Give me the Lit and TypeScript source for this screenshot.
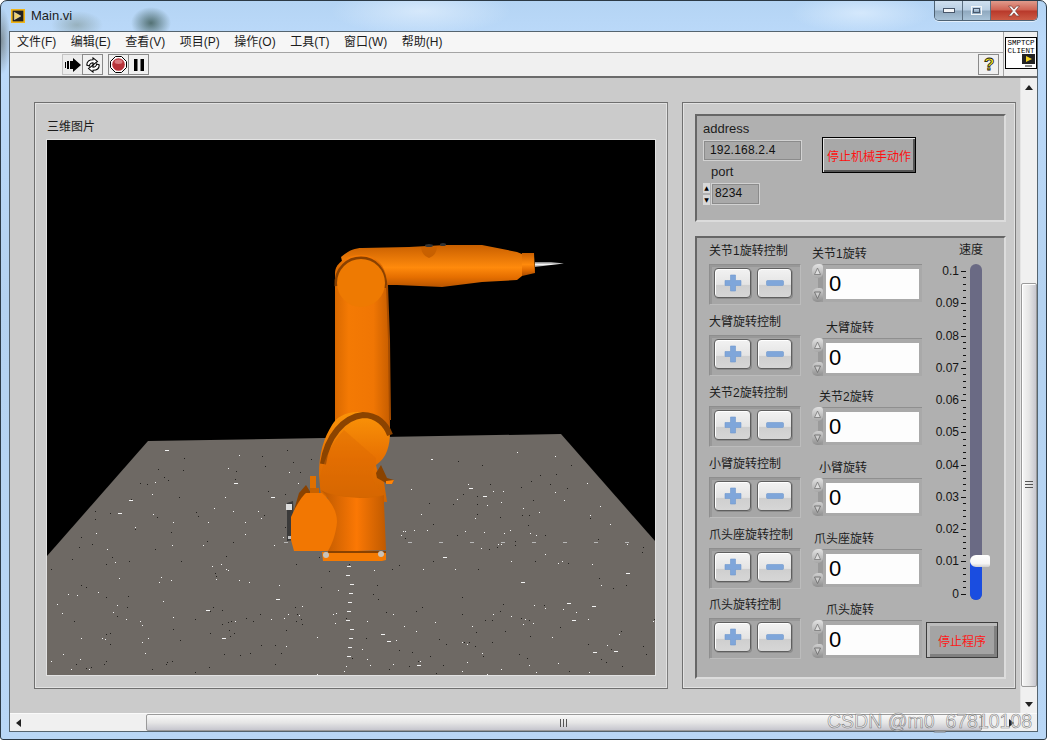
import { LitElement, css, html, svg } from 'lit';
import { customElement } from 'lit/decorators.js';

const MENUS = ['文件(F)', '编辑(E)', '查看(V)', '项目(P)', '操作(O)', '工具(T)', '窗口(W)', '帮助(H)'];

// gap = space above the right hand row, pad = label indent
const JOINTS = [
  { ctrl: '关节1旋转控制', name: '关节1旋转', gap: 9, pad: 0, ctrlGap: 0 },
  { ctrl: '大臂旋转控制', name: '大臂旋转', gap: 19, pad: 14, ctrlGap: 10 },
  { ctrl: '关节2旋转控制', name: '关节2旋转', gap: 14, pad: 7, ctrlGap: 10 },
  { ctrl: '小臂旋转控制', name: '小臂旋转', gap: 16, pad: 7, ctrlGap: 10 },
  { ctrl: '爪头座旋转控制', name: '爪头座旋转', gap: 16, pad: 2, ctrlGap: 10 },
  { ctrl: '爪头旋转控制', name: '爪头旋转', gap: 16, pad: 14, ctrlGap: 9 },
];

const TICKS = Array.from({ length: 51 }, (_, i) => {
  const major = i % 5 === 0;
  const v = (50 - i) / 500;
  return { major, label: major ? (i === 50 ? '0' : String(Number(v.toFixed(2)))) : '' };
});

// floor speckle, seeded so each run draws the same
function speckles() {
  let s = 4711;
  const rnd = () => {
    s = (s * 16807) % 2147483647;
    return s / 2147483647;
  };
  const out = [];
  for (let i = 0; i < 400; i++) {
    const y = 442 + Math.pow(rnd(), 0.8) * 232;
    const t = (y - 441) / 115;
    const left = Math.max(49, 149 - 100 * t);
    const right = Math.min(656, 562 + 95 * t);
    const x = left + rnd() * (right - left);
    const white = rnd() > 0.5;
    const wide = white && rnd() > 0.88;
    out.push(svg`<rect x=${x.toFixed(0)} y=${y.toFixed(0)} width=${wide ? 4 : 1} height="1" fill=${white ? '#f4f4f4' : '#24221f'}></rect>`);
  }
  for (let y = 566; y < 665; y += 9) {
    const x = 347 + (y % 5);
    out.push(svg`<rect x=${x} y=${y} width="4" height="1" fill="#eee"></rect>`);
  }
  for (let x = 285; x < 640; x += 31) {
    out.push(svg`<rect x=${x} y="542" width="4" height="1" fill="#b8b8b8"></rect>`);
  }
  return out;
}

@customElement('app-root')
export class AppRoot extends LitElement {
  static override styles = css`
    :host {
      display: block;
      position: relative;
      width: 1047px;
      height: 740px;
      overflow: hidden;
      background: #fff;
      font-family: 'Liberation Sans', 'Noto Sans CJK SC', sans-serif;
      font-size: 12px;
      color: #1c1c1c;
    }
    .window {
      box-sizing: border-box;
      height: 740px;
      padding: 0 8px 7px;
      display: flex;
      flex-direction: column;
      border: 1px solid #2c3a46;
      border-radius: 7px 7px 3px 3px;
      background:
        radial-gradient(ellipse 20px 16px at 150px 22px, rgba(40, 70, 60, 0.7), transparent),
        radial-gradient(ellipse 26px 14px at 76px 24px, rgba(110, 130, 120, 0.45), transparent),
        radial-gradient(ellipse 10px 34px at 0 40px, rgba(100, 110, 110, 0.7), transparent),
        radial-gradient(ellipse 90px 24px at 420px 10px, rgba(235, 245, 255, 0.6), transparent),
        radial-gradient(ellipse 70px 20px at 860px 12px, rgba(225, 240, 255, 0.7), transparent),
        linear-gradient(180deg, #b4d4f4, #bcdafa 40px, #b4d2f0 300px, #b9d7f6);
    }
    .title {
      height: 30px;
      flex: none;
      display: flex;
      align-items: flex-start;
      gap: 6px;
      padding: 8px 0 0 2px;
      box-sizing: border-box;
      font-size: 13px;
    }
    .title span {
      line-height: 14px;
    }
    .wbtns {
      margin: -8px 0 0 auto;
      display: flex;
      height: 19px;
      border: 1px solid #4e6274;
      border-top: none;
      border-radius: 0 0 5px 5px;
      overflow: hidden;
      box-shadow: 0 1px 0 rgba(255, 255, 255, 0.6);
    }
    .wbtn {
      width: 27px;
      display: flex;
      align-items: center;
      justify-content: center;
      background: linear-gradient(180deg, #cfe0f0, #b9cfe4 48%, #8fa8be 52%, #a9c3d8);
      border-right: 1px solid #5d7082;
    }
    .wbtn.close {
      width: 46px;
      border: none;
      background: linear-gradient(180deg, #e09b8c, #cf6252 48%, #b8382a 52%, #cc5b45);
    }
    .client {
      flex: 1;
      min-height: 0;
      display: flex;
      flex-direction: column;
      border: 1px solid #55646f;
      background: #f0f0f0;
    }
    .top {
      flex: none;
      display: flex;
      height: 46px;
      border-bottom: 2px solid #6b6b6b;
      box-sizing: border-box;
    }
    .bars {
      flex: 1;
    }
    .menu {
      height: 21px;
      box-sizing: border-box;
      display: flex;
      gap: 14.5px;
      align-items: center;
      padding: 0 0 3px 7px;
      background: #f6f6f6;
      border-bottom: 1px solid #a4a4a4;
    }
    .tools {
      height: 23px;
      display: flex;
      align-items: center;
      padding-left: 52px;
      position: relative;
    }
    .tbtn {
      box-sizing: border-box;
      width: 21px;
      height: 21px;
      display: flex;
      align-items: center;
      justify-content: center;
      border: 1px solid #8a8a8a;
      margin-right: -1px;
    }
    .tbtn.first {
      border-color: #c4c4c4 #8a8a8a #c4c4c4 #c4c4c4;
      background: #ececec;
    }
    .tbtn.split {
      margin-left: 6px;
    }
    .tbtn.help {
      margin: 0 4px 0 auto;
    }
    .help-mark {
      font: bold 17px 'Liberation Sans', sans-serif;
      fill: #ffee20;
      stroke: #111;
      stroke-width: 0.8px;
    }
    .pane {
      width: 34px;
      box-sizing: border-box;
      border-left: 1px solid #a4a4a4;
      padding: 5px 0 0 1px;
    }
    .conn {
      position: relative;
      box-sizing: border-box;
      width: 32px;
      height: 32px;
      background: #fff;
      border: 1px solid #000;
      font: 7.5px/8px 'Liberation Mono', monospace;
      text-align: center;
      color: #000;
      padding-top: 1px;
    }
    .conn svg {
      position: absolute;
      right: 0;
      bottom: 0;
    }
    .main {
      flex: 1;
      min-height: 0;
      display: flex;
    }
    .canvas {
      flex: 1;
      box-sizing: border-box;
      background: #cbcbcb;
      padding: 24px 0 0 24px;
      display: flex;
      gap: 14px;
      align-items: flex-start;
    }
    .deco {
      box-sizing: border-box;
      height: 587px;
      border: 1px solid;
      border-color: #6f6f6f #7d7d7d #6f6f6f #6f6f6f;
      box-shadow: inset 1px 1px 0 #e2e2e2, inset -1px -1px 0 #e2e2e2;
    }
    .deco.left {
      width: 634px;
      padding: 17px 0 0 11px;
    }
    .deco.right {
      width: 334px;
      padding: 11px 0 0 12px;
      display: flex;
      flex-direction: column;
      gap: 14px;
    }
    .pic-label {
      height: 19px;
      line-height: 14px;
      margin-left: 1px;
    }
    .pic {
      box-sizing: border-box;
      width: 610px;
      height: 537px;
      border: 1px solid #e2e2e2;
      background: #000;
    }
    .pic svg {
      display: block;
    }
    .box {
      box-sizing: border-box;
      width: 311px;
      background: #b0b0b0;
      border: 2px solid;
      border-color: #666 #dcdcdc #dcdcdc #666;
    }
    .box.net {
      height: 108px;
      display: flex;
      padding: 5px 0 0 6px;
    }
    .latin {
      font-size: 13px;
      line-height: 15px;
    }
    .ind {
      box-sizing: border-box;
      width: 99px;
      height: 21px;
      margin-top: 4px;
      border: 1px solid #d2d2d2;
      outline: 1px solid #8b8b8b;
      outline-offset: -2px;
      background: #a9a9a9;
      line-height: 19px;
      padding-left: 6px;
      letter-spacing: 0.2px;
      color: #111;
    }
    .port-label {
      margin: 3px 0 4px 8px;
    }
    .port {
      display: flex;
      gap: 1px;
    }
    .mini-spin {
      width: 7px;
      display: flex;
      flex-direction: column;
      justify-content: space-between;
      height: 22px;
    }
    .mini-spin i {
      height: 10px;
      background: #d8d8d8;
      display: flex;
      align-items: center;
      justify-content: center;
      font: 6px/10px 'DejaVu Sans', sans-serif;
      color: #000;
    }
    .port .ind {
      width: 49px;
      height: 22px;
      margin: 0;
      padding-left: 3px;
    }
    .stop-a {
      box-sizing: border-box;
      width: 94px;
      height: 36px;
      margin: 16px 0 0 20px;
      border: 1px solid #000;
      background: #a8a8a8;
      box-shadow: inset 1px 1px 0 #e4e4e4, inset -2px -2px 0 #555;
      color: #ff1010;
      display: flex;
      align-items: center;
      justify-content: center;
    }
    .box.ctl {
      height: 443px;
      display: flex;
      padding-left: 12px;
    }
    .col-a {
      width: 92px;
      margin-right: 11px;
      padding-top: 6px;
    }
    .ctl-label {
      line-height: 14px;
      height: 20px;
      white-space: nowrap;
    }
    .pair {
      box-sizing: border-box;
      width: 92px;
      height: 41px;
      display: flex;
      gap: 6px;
      padding: 3px 0 0 4px;
      background: #a6a6a6;
      border: 1px solid;
      border-color: #8e8e8e #bcbcbc #bcbcbc #8e8e8e;
      box-shadow: inset 2px 2px 0 #989898;
    }
    .pm {
      box-sizing: border-box;
      height: 30px;
      width: 37px;
      display: flex;
      align-items: center;
      justify-content: center;
      border: 1px solid #5f5f5f;
      border-radius: 4px;
      background: linear-gradient(180deg, #f2f2f2, #e4e4e4 55%, #cfcfcf 58%, #d6d6d6);
      box-shadow: inset 1px 1px 0 #fff, 1px 1px 0 #8c8c8c;
    }
    .pm.minus {
      width: 35px;
    }
    .col-b {
      width: 111px;
    }
    .ctl-name {
      height: 14px;
      line-height: 14px;
      margin-bottom: 3px;
      white-space: nowrap;
    }
    .num {
      display: flex;
      height: 38px;
    }
    .spin {
      width: 11px;
      display: flex;
      flex-direction: column;
      justify-content: space-between;
      background: linear-gradient(90deg, transparent 6px, #9a9a9a 6px);
    }
    .spin i {
      height: 14px;
      background: linear-gradient(180deg, #e2e2e2, #a8a8a8);
      border-radius: 6px 3px 5px 5px;
      display: block;
    }
    .spin i:last-child {
      background: linear-gradient(180deg, #cfcfcf, #8f8f8f);
    }
    .spin svg {
      display: block;
    }
    .field {
      box-sizing: border-box;
      width: 99px;
      padding: 4px 3px 4px 3px;
      background: #a9a9a9;
      border-top: 1px solid #8f8f8f;
    }
    .field div {
      height: 30px;
      background: #fdfdfd;
      font-size: 22px;
      line-height: 30px;
      padding-left: 3px;
      color: #000;
    }
    .col-c {
      flex: 1;
      padding-left: 2px;
    }
    .speed {
      margin: 5px 0 7px 26px;
      text-align: center;
      width: 40px;
      line-height: 14px;
    }
    .slider {
      display: flex;
      gap: 4px;
      height: 336px;
    }
    .scale {
      width: 41px;
      height: 324px;
      margin-top: 7px;
      display: flex;
      flex-direction: column;
      justify-content: space-between;
    }
    .tick {
      height: 1px;
      display: flex;
      justify-content: flex-end;
      align-items: center;
      gap: 2px;
    }
    .tick b {
      font-weight: 400;
      line-height: 1px;
      color: #141414;
    }
    .tick i {
      width: 3px;
      height: 1px;
      background: #111;
    }
    .tick.major i {
      width: 5px;
    }
    .track {
      position: relative;
      width: 12px;
      background: #6a6a84;
      border-radius: 6px;
      overflow: visible;
    }
    .fill {
      position: absolute;
      left: 0;
      right: 0;
      bottom: 0;
      height: 40px;
      background: #1a4de0;
      border-radius: 0 0 6px 6px;
    }
    .thumb {
      position: absolute;
      left: 0;
      top: 291px;
      width: 20px;
      height: 12px;
      background: linear-gradient(180deg, #fff, #f6f6f6 70%, #cfcfcf);
      border-radius: 7px 3px 3px 7px;
    }
    .stop-b {
      box-sizing: border-box;
      width: 72px;
      height: 36px;
      margin: 22px 0 0 1px;
      border: 1px solid #3c3c3c;
      background: #a4a4a4;
      box-shadow: inset 3px 3px 0 #bcbcbc, inset -3px -3px 0 #808080;
      color: #ff1818;
      display: flex;
      align-items: center;
      justify-content: center;
    }
    .vbar {
      width: 17px;
      flex: none;
      display: flex;
      flex-direction: column;
      background: #f0f0f0;
      border-left: 1px solid #e4e4e4;
      box-sizing: border-box;
    }
    .arrow {
      flex: none;
      display: flex;
      align-items: center;
      justify-content: center;
      height: 18px;
      font-size: 0;
    }
    .vtrack {
      flex: 1;
      padding-top: 187px;
      padding-bottom: 8px;
      display: flex;
    }
    .vthumb {
      flex: 1;
      box-sizing: border-box;
      border: 1px solid #9a9a9a;
      border-radius: 2px;
      background: linear-gradient(90deg, #f6f6f6, #e6e6e6 50%, #c6c6ce);
      box-shadow: inset 1px 1px 0 #fff;
      display: flex;
      align-items: center;
      justify-content: center;
    }
    .hbar {
      flex: none;
      height: 18px;
      display: flex;
      padding-right: 17px;
      background: #f0f0f0;
      border-top: 1px solid #fafafa;
      box-sizing: border-box;
    }
    .harrow {
      width: 17px;
      flex: none;
      display: flex;
      align-items: center;
      justify-content: center;
    }
    .htrack {
      flex: 1;
      padding-left: 119px;
      padding-right: 21px;
      display: flex;
    }
    .hthumb {
      flex: 1;
      box-sizing: border-box;
      border: 1px solid #9a9a9a;
      border-radius: 2px;
      background: linear-gradient(180deg, #f8f8f8, #e6e6e6 50%, #c6c6ce);
      display: flex;
      align-items: center;
      justify-content: center;
    }
    .mark {
      position: absolute;
      left: 827px;
      top: 709px;
      font-size: 19.5px;
      line-height: 24px;
      color: rgba(255, 255, 255, 0.45);
      -webkit-text-stroke: 0.6px rgba(90, 90, 90, 0.75);
      white-space: nowrap;
    }
  `;

  private renderJointControls() {
    return JOINTS.map(
      (j) => html`
        <div style="margin-top:${j.ctrlGap}px">
          <div class="ctl-label">${j.ctrl}</div>
          <div class="pair">
            <div class="pm">
              <svg width="18" height="18" viewBox="0 0 18 18"><path d="M6.500 1h5v5.500H17v5h-5.500V17h-5v-5.500H1v-5h5.500z" fill="#7fa6da" stroke="#6f98cf" stroke-width=".6"/></svg>
            </div>
            <div class="pm minus">
              <svg width="18" height="6" viewBox="0 0 18 6"><rect x=".5" y=".5" width="17" height="5" rx="1" fill="#7fa6da" stroke="#6f98cf" stroke-width=".6"/></svg>
            </div>
          </div>
        </div>
      `,
    );
  }

  private renderJointValues() {
    return JOINTS.map(
      (j) => html`
        <div style="margin-top:${j.gap}px">
          <div class="ctl-name" style="padding-left:${j.pad}px">${j.name}</div>
          <div class="num">
            <div class="spin">
              <i><svg width="11" height="14" viewBox="0 0 11 14"><path d="M5.500 4 8.500 10.500h-6z" fill="#ddd" stroke="#777" stroke-width=".8"/></svg></i>
              <i><svg width="11" height="14" viewBox="0 0 11 14"><path d="M5.500 10.500 8.500 4h-6z" fill="#ccc" stroke="#666" stroke-width=".8"/></svg></i>
            </div>
            <div class="field"><div>0</div></div>
          </div>
        </div>
      `,
    );
  }

  private renderRobot() {
    return svg`
      <defs>
        <linearGradient id="vArm" x1="0" x2="1" y1="0" y2="0">
          <stop offset="0" stop-color="#d96900"/><stop offset=".25" stop-color="#f47a04"/>
          <stop offset=".7" stop-color="#f07604"/><stop offset="1" stop-color="#c65d00"/>
        </linearGradient>
        <linearGradient id="hArm" x1="0" x2="0" y1="0" y2="1">
          <stop offset="0" stop-color="#c85f00"/><stop offset=".5" stop-color="#ff8a0c"/>
          <stop offset=".72" stop-color="#e56e00"/><stop offset="1" stop-color="#a84c00"/>
        </linearGradient>
        <linearGradient id="base" x1="0" x2="1" y1="0" y2="0">
          <stop offset="0" stop-color="#bc5800"/><stop offset=".55" stop-color="#fb7804"/>
          <stop offset="1" stop-color="#c05a00"/>
        </linearGradient>
        <linearGradient id="ball" x1="0" x2="0" y1="0" y2="1">
          <stop offset="0" stop-color="#fb9408"/><stop offset=".5" stop-color="#e87202"/><stop offset="1" stop-color="#d06400"/>
        </linearGradient>
        <linearGradient id="spike" x1="0" x2="0" y1="0" y2="1">
          <stop offset="0" stop-color="#777"/><stop offset=".5" stop-color="#f4f4f4"/>
          <stop offset="1" stop-color="#888"/>
        </linearGradient>
      </defs>
      <path d="M149 441 562 434 656 541V675H48V556Z" fill="#6e6964"/>
      ${speckles()}
      <path d="M536 262 552 262 565 263.500 552 265 536 267Z" fill="url(#spike)"/>
      <path d="M342 257C350 250 356 248 363 248L410 247 447 245 483 245 518 252 523 254V276L518 280 483 282 443 287 398 285 388 285 350 290Z" fill="url(#hArm)"/>
      <path d="M523 253H535L536 273 523 276Z" fill="url(#hArm)"/>
      <path d="M422 247H438Q437 256 430 258 423 256 422 247Z" fill="#c86000"/>
      <ellipse cx="430" cy="245.500" rx="4" ry="1.500" fill="#333"/>
      <ellipse cx="444" cy="244.500" rx="3" ry="1.500" fill="#333"/>
      <path d="M336 273 C336 262 350 255 362 255 C375 255 387 263 388 283 L390 340 L391 432 L336 425Z" fill="url(#vArm)"/>
      <path d="M338 286 C337 268 350 259 362 259 C376 259 386 270 386 288" fill="none" stroke="#8a4100" stroke-width="5"/>
      <path d="M388 285 L390 340 L391 420" fill="none" stroke="#a54c00" stroke-width="2"/>
      <circle cx="362" cy="283" r="24" fill="#ee7a02"/>
      <path d="M333 425 C325 438 320 452 320 475 L322 497 L388 502 L385 482 C380 476 378 470 377 465 C388 458 391 445 391 432 C385 420 372 412 360 412 C345 412 337 418 333 425Z" fill="url(#ball)"/>
      <path d="M324 464 C328 436 345 417 364 415 C378 415 387 424 391 435" fill="none" stroke="#8b4300" stroke-width="6"/>
      <path d="M345 430 L377 458 377 465 C370 474 372 482 385 495 C360 500 335 496 321 490 C320 470 330 445 345 430Z" fill="#dc6802" opacity=".4"/>
      <path d="M377 473 382 465 388 478 395 480 393 484 387 483 378 478Z" fill="#8a4300"/>
      <path d="M387 481 395 480 393 484 387 484Z" fill="#ff8408"/>
      <path d="M322 490 C332 497 370 501 385 495 L385 503 L387 550 L329 552 C335 530 338 518 327 495Z" fill="url(#base)"/>
      <path d="M288 503 294 501 296 540 288 541Z" fill="#3a3a3a"/>
      <rect x="287" y="504" width="6" height="6" fill="#ddd"/>
      <rect x="289" y="536" width="4" height="3" fill="#bbb"/>
      <path d="M295 510 300 493 307 485 312 493 323 493 310 505Z" fill="#8a4200"/>
      <rect x="311" y="476" width="6" height="12" fill="#e07000"/>
      <rect x="311" y="488" width="9" height="5" fill="#c86200"/>
      <path d="M292 517 C296 508 302 497 307 493 L323 493 C331 500 338 510 338 522 C337 534 333 544 329 551 L295 551 292 540Z" fill="#f27702"/>
      <path d="M323 552H387L387 560 383 561H324Z" fill="#f47a02"/>
      <path d="M329 551H387V553H329Z" fill="#8a4200"/>
      <circle cx="327" cy="555" r="3" fill="#c9c2b8"/>
      <circle cx="382" cy="554" r="3" fill="#c9c2b8"/>
    `;
  }

  override render() {
    return html`
      <div class="window">
        <div class="title">
          <svg width="14" height="14" viewBox="0 0 17 17">
            <rect width="17" height="17" fill="#f0b418"/>
            <rect x="2" y="2" width="13" height="13" fill="#222"/>
            <path d="M4 4 12 8.500 4 13Z" fill="#f2d36a" stroke="#fff" stroke-width=".5"/>
          </svg>
          <span>Main.vi</span>
          <div class="wbtns">
            <div class="wbtn"><svg width="12" height="6"><rect x=".5" y=".5" width="11" height="4" fill="#f4f6f8" stroke="#47566a"/></svg></div>
            <div class="wbtn"><svg width="12" height="10"><rect x=".5" y=".5" width="10" height="8" fill="none" stroke="#f2f5f8" stroke-width="1"/><rect x="2.500" y="2.500" width="6" height="4" fill="none" stroke="#47566a"/></svg></div>
            <div class="wbtn close"><svg width="14" height="12" viewBox="0 0 14 12"><path d="M1.500 1h3L7 4l2.500-3h3L8.500 6l4 5h-3L7 8l-2.500 3h-3l4-5z" fill="#f2f2f2" stroke="#7a3a32" stroke-width=".7"/></svg></div>
          </div>
        </div>
        <div class="client">
          <div class="top">
            <div class="bars">
              <div class="menu">${MENUS.map((m) => html`<span>${m}</span>`)}</div>
              <div class="tools">
                <div class="tbtn first">
                  <svg width="18" height="16" viewBox="0 0 18 16"><path d="M1 5h1v6H1zM3 4h2v8H3zM6 4h3V1l8 7-8 7v-3H6z" fill="#000"/></svg>
                </div>
                <div class="tbtn">
                  <svg width="16" height="16" viewBox="0 0 18 18" fill="#fff" stroke="#000" stroke-width="1.200"><path d="M2 9C2 5 5 3 9 3V1l5 4-5 4V6.500C7 6.500 5 8 5 10Z"/><path d="M16 9c0 4-3 6-7 6v2l-5-4 5-4v2.500c2 0 4-1.500 4-3.500Z"/></svg>
                </div>
                <div class="tbtn split">
                  <svg width="17" height="17" viewBox="0 0 17 17"><path d="M5.500 .5h6l5 5v6l-5 5h-6l-5-5v-6z" fill="#fff" stroke="#000"/><circle cx="8.500" cy="8.500" r="6.300" fill="#b8343a"/><ellipse cx="8.500" cy="5.800" rx="4" ry="2.200" fill="#d77a7e"/></svg>
                </div>
                <div class="tbtn">
                  <svg width="12" height="12" viewBox="0 0 12 12"><rect x="1" y="0" width="3.500" height="12" fill="#000"/><rect x="7.500" y="0" width="3.500" height="12" fill="#000"/></svg>
                </div>
                <div class="tbtn help">
                  <svg width="16" height="19" viewBox="0 0 16 19"><text class="help-mark" x="3" y="15">?</text></svg>
                </div>
              </div>
            </div>
            <div class="pane">
              <div class="conn">
                SMPTCP<br />CLIENT
                <svg width="15" height="15" viewBox="0 0 15 15">
                  <rect x="1" y="1" width="13" height="10" fill="#222"/>
                  <path d="M5 3 11 6 5 9Z" fill="#f2d020"/>
                  <rect x="4" y="12" width="7" height="2" fill="#888"/>
                </svg>
              </div>
            </div>
          </div>
          <div class="main">
            <div class="canvas">
              <div class="deco left">
                <div class="pic-label">三维图片</div>
                <div class="pic">
                  <svg width="608" height="535" viewBox="48 140 608 535">${this.renderRobot()}</svg>
                </div>
              </div>
              <div class="deco right">
                <div class="box net">
                  <div>
                    <div class="latin">address</div>
                    <div class="ind">192.168.2.4</div>
                    <div class="latin port-label">port</div>
                    <div class="port">
                      <div class="mini-spin"><i>▲</i><i>▼</i></div>
                      <div class="ind">8234</div>
                    </div>
                  </div>
                  <div class="stop-a">停止机械手动作</div>
                </div>
                <div class="box ctl">
                  <div class="col-a">${this.renderJointControls()}</div>
                  <div class="col-b">${this.renderJointValues()}</div>
                  <div class="col-c">
                    <div class="speed">速度</div>
                    <div class="slider">
                      <div class="scale">
                        ${TICKS.map(
                          (t) => html`<div class="tick ${t.major ? 'major' : ''}">${t.label ? html`<b>${t.label}</b>` : ''}<i></i></div>`,
                        )}
                      </div>
                      <div class="track"><div class="fill"></div><div class="thumb"></div></div>
                    </div>
                    <div class="stop-b">停止程序</div>
                  </div>
                </div>
              </div>
            </div>
            <div class="vbar">
              <div class="arrow"><svg width="8" height="5"><path d="M4 0 8 5H0Z" fill="#222"/></svg></div>
              <div class="vtrack">
                <div class="vthumb"><svg width="8" height="8"><path d="M0 .5h8M0 3.500h8M0 6.500h8" stroke="#555"/></svg></div>
              </div>
              <div class="arrow"><svg width="8" height="5"><path d="M4 5 8 0H0Z" fill="#222"/></svg></div>
            </div>
          </div>
          <div class="hbar">
            <div class="harrow"><svg width="5" height="8"><path d="M0 4 5 0V8Z" fill="#222"/></svg></div>
            <div class="htrack">
              <div class="hthumb"><svg width="8" height="8"><path d="M.5 0v8M3.500 0v8M6.500 0v8" stroke="#555"/></svg></div>
            </div>
            <div class="harrow"><svg width="5" height="8"><path d="M5 4 0 0V8Z" fill="#222"/></svg></div>
          </div>
        </div>
      </div>
      <div class="mark">CSDN @m0_67810108</div>
    `;
  }
}

declare global {
  interface HTMLElementTagNameMap {
    'app-root': AppRoot;
  }
}
